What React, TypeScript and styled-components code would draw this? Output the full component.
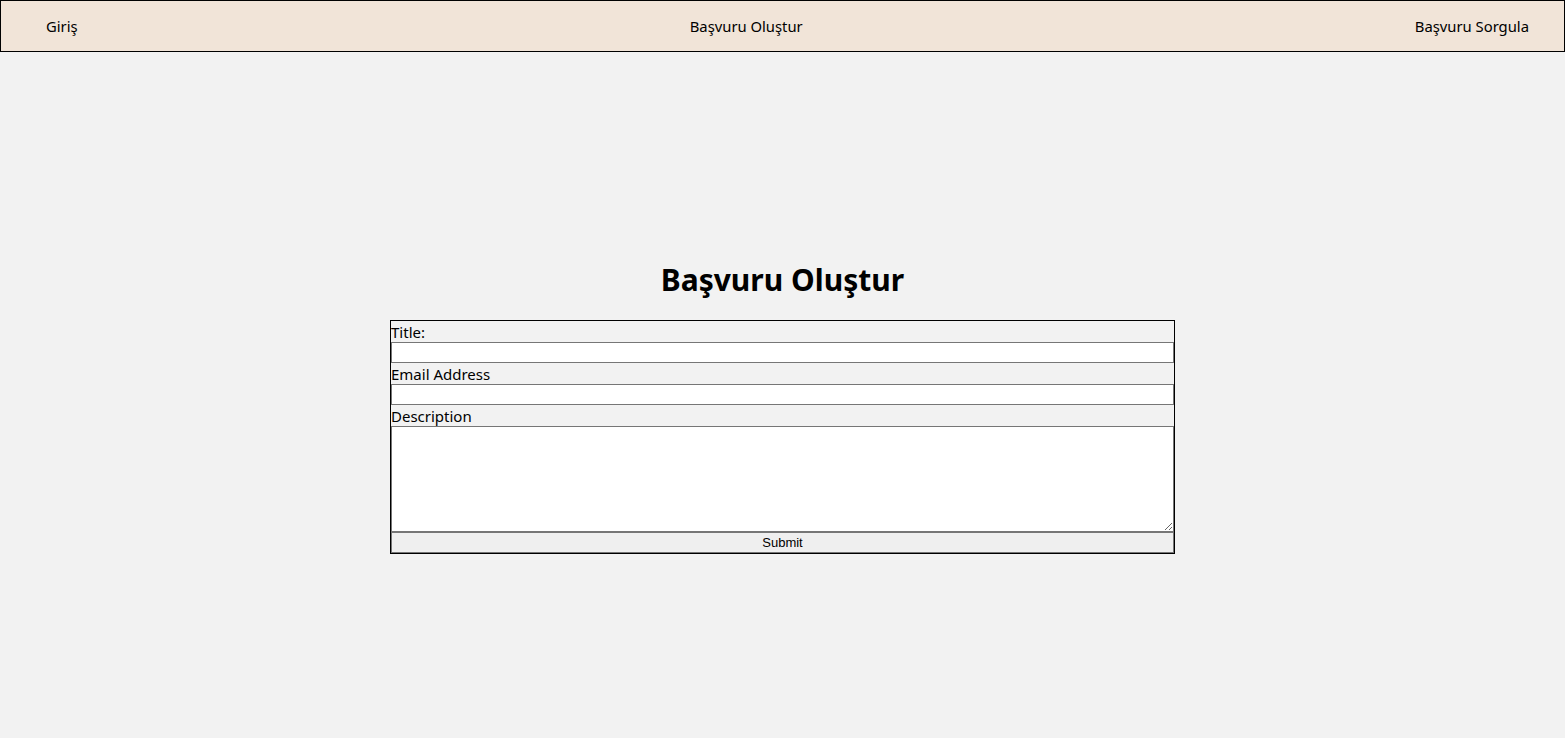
import React from "react";
import styled, { createGlobalStyle } from "styled-components";

const GlobalStyle = createGlobalStyle`
  html, body {
    margin: 0;
    padding: 0;
    background-color: #f2f2f2;
    font-family: "Noto Sans", "Open Sans", sans-serif;
    color: #000000;
  }
`;

const Page = styled.div`
  min-height: 738px;
  background-color: #f2f2f2;
`;

const NavBar = styled.nav`
  display: flex;
  justify-content: space-between;
  align-items: center;
  height: 50px;
  padding: 0 35px 0 45px;
  background-color: #f1e4d8;
  border: 1px solid #000000;
`;

const NavLink = styled.a`
  font-size: 14.8px;
  color: #000000;
  text-decoration: none;
  cursor: pointer;
`;

const Main = styled.main`
  display: flex;
  flex-direction: column;
  align-items: center;
  padding-top: 206px;
`;

const Heading = styled.h1`
  margin: 0 0 18px;
  font-size: 30px;
  font-weight: 700;
  line-height: 44px;
`;

const Form = styled.form`
  display: flex;
  flex-direction: column;
  width: 785px;
  box-sizing: border-box;
  border: 1px solid #000000;
`;

const Label = styled.label`
  font-size: 15px;
  line-height: 23px;
  height: 21px;
  overflow: hidden;
  white-space: nowrap;
`;

const TextInput = styled.input`
  display: block;
  width: 100%;
  height: 21px;
  box-sizing: border-box;
  margin: 0;
  border: 1px solid #767676;
  background: #ffffff;
`;

const TextArea = styled.textarea`
  display: block;
  width: 100%;
  height: 106px;
  box-sizing: border-box;
  margin: 0;
  border: 1px solid #767676;
  background: #ffffff;
`;

const SubmitButton = styled.button`
  display: block;
  width: 100%;
  height: 21px;
  margin: 0;
  padding: 0 0 1px;
  box-sizing: border-box;
  font-family: "Liberation Sans", Arial, sans-serif;
  font-size: 13px;
  color: #000000;
  background-color: #efefef;
  border: 1px solid #767676;
  cursor: pointer;
`;

const App = () => {
  return (
    <Page>
      <GlobalStyle />
      <NavBar>
        <NavLink>Giriş</NavLink>
        <NavLink>Başvuru Oluştur</NavLink>
        <NavLink>Başvuru Sorgula</NavLink>
      </NavBar>
      <Main>
        <Heading>Başvuru Oluştur</Heading>
        <Form onSubmit={(e) => e.preventDefault()}>
          <Label htmlFor="title">Title:</Label>
          <TextInput id="title" type="text" />
          <Label htmlFor="email">Email Address</Label>
          <TextInput id="email" type="email" />
          <Label htmlFor="description">Description</Label>
          <TextArea id="description" />
          <SubmitButton type="submit">Submit</SubmitButton>
        </Form>
      </Main>
    </Page>
  );
};

export default App;
